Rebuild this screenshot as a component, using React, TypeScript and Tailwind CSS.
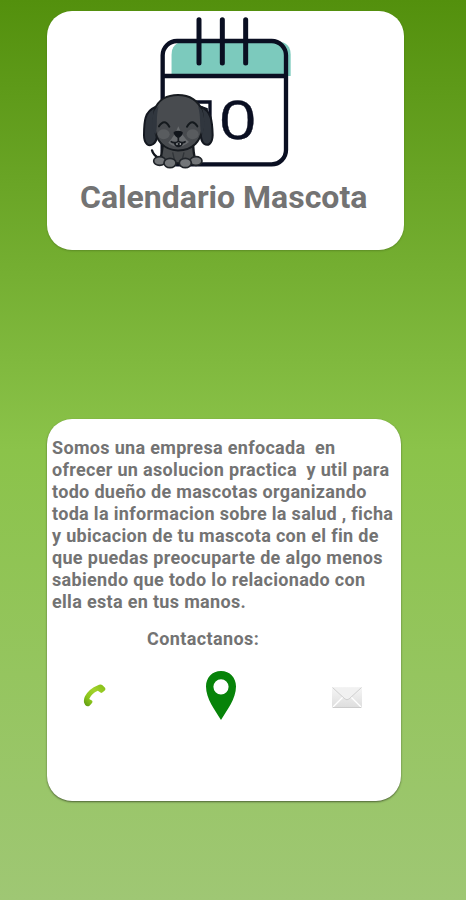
import React from "react";

function CalendarLogo() {
  return (
    <svg className="block h-[170px] w-[180px]" viewBox="0 0 540 510" fill="none" role="img" aria-label="Calendario con mascota">
      <path d="M124 213V150Q126 112 160 110H446Q482 112 482 150V213Z" fill="#7ccabd" />
      <path d="M104 213V145Q106 119 132 112Q124 125 124 150V213Z" fill="#fff" />
      <rect x="98" y="108" width="370" height="370" rx="43" stroke="#0a0f22" strokeWidth="13" />
      <path d="M97 213H468" stroke="#0a0f22" strokeWidth="13" />
      <path d="M207 44V174M277 44V174M347 44V174" stroke="#0a0f22" strokeWidth="15" strokeLinecap="round" />
      <text transform="translate(323 401) scale(1.27 1)" fontSize="157" textAnchor="middle" fill="#0a0f22" stroke="#0a0f22" strokeWidth="1" className="font-['Open_Sans',sans-serif]">0</text>
      <path d="M196 291H240V375" stroke="#0a0f22" strokeWidth="10" />
      <path d="M206 303L230 312V336" stroke="#0a0f22" strokeWidth="7" />
      <path d="M66 436Q70 453 91 461" stroke="#11151c" strokeWidth="7" strokeLinecap="round" />
      <path d="M99 417C94 446 94 465 86 475H202C189 459 191 435 189 412Z" fill="#484b4e" stroke="#15191e" strokeWidth="7" />
      <path d="M128 442L134 468M162 442L156 468" stroke="#303438" strokeWidth="4" />
      <g fill="#737679" stroke="#202429" strokeWidth="5">
        <ellipse cx="89" cy="468" rx="18" ry="13" />
        <ellipse cx="198" cy="468" rx="18" ry="13" />
        <ellipse cx="120" cy="474" rx="18" ry="14" />
        <ellipse cx="166" cy="474" rx="18" ry="14" />
      </g>
      <path d="M76 306C44 319 42 350 42 391C42 418 57 426 70 417C86 407 82 371 83 345Z" fill="#30363e" stroke="#141820" strokeWidth="6" />
      <path d="M213 306C244 317 247 350 248 391C247 418 233 424 222 416C208 405 212 372 209 344Z" fill="#30363e" stroke="#141820" strokeWidth="6" />
      <path d="M74 315C84 284 112 270 144 270C178 270 207 286 216 319C223 354 219 394 196 417C167 444 119 442 94 416C71 392 68 347 74 315Z" fill="#484b4f" stroke="#171b20" strokeWidth="6" />
      <path d="M74 315C62 343 65 371 76 390C85 368 76 340 86 303Z" fill="#30363e" />
      <path d="M216 315C226 343 225 371 216 390C206 368 215 340 204 303Z" fill="#30363e" />
      <ellipse cx="101" cy="388" rx="18" ry="15" fill="#595c5f" />
      <ellipse cx="188" cy="388" rx="18" ry="15" fill="#595c5f" />
      <path d="M145 364Q133 394 115 413Q144 438 177 411Q156 394 145 364Z" fill="#686b6e" />
      <path d="M87 364Q103 339 118 365M171 365Q187 339 202 364" stroke="#14191d" strokeWidth="6" strokeLinecap="round" />
      <path d="M131 381Q144 373 158 381Q160 391 145 400Q129 390 131 381Z" fill="#11151b" />
      <path d="M145 394V409M122 409Q133 417 145 409Q158 417 167 409" stroke="#171b20" strokeWidth="5" />
      <path d="M131 414H160Q155 427 145 427Q135 427 131 414Z" fill="#171b20" />
      <path d="M139 414V420H143V414M149 414V420H153V414" fill="#9a9da0" />
    </svg>
  );
}

const lines = [
  "Somos una empresa enfocada  en",
  "ofrecer un asolucion practica  y util para",
  "todo dueño de mascotas organizando",
  "toda la informacion sobre la salud , ficha",
  "y ubicacion de tu mascota con el fin de",
  "que puedas preocuparte de algo menos",
  "sabiendo que todo lo relacionado con",
  "ella esta en tus manos.",
];

function PhoneIcon() {
  return (
    <svg className="h-6 w-6" viewBox="0 0 24 24" aria-label="Teléfono">
      <defs><linearGradient id="phone" x1="1" y1="0" x2="0" y2="1"><stop stopColor="#83bd16" /><stop offset=".4" stopColor="#a2d22c" /><stop offset=".7" stopColor="#8cc61b" /><stop offset="1" stopColor="#579311" /></linearGradient></defs>
      <path d="M14.5 1.5Q17.5-.3 19.5 1.2L22 3.8Q23 5.5 21.5 6.8L19.3 8.6Q17.8 9.4 16.7 8.1L14.8 6.8Q8.5 9.5 6.2 15L8.9 16.6Q10.1 17.8 8.8 19.3L6.5 21.7Q4.2 23.2 2.2 21L1 18.5Q.5 15 2 12.2Q6.5 4.5 14.5 1.5Z" fill="url(#phone)" />
    </svg>
  );
}

function PinIcon() {
  return (
    <svg className="h-[50px] w-8" viewBox="0 0 32 50" aria-label="Ubicación">
      <path fillRule="evenodd" d="M16 0C7 0 1 6.8 1 15.5C1 28 10 39 16 49C22 39 31 28 31 15.5C31 6.8 25 0 16 0ZM16 8.2A7.6 7.6 0 1 1 16 23.4A7.6 7.6 0 1 1 16 8.2Z" fill="#078309" />
    </svg>
  );
}

function MailIcon() {
  return (
    <svg className="h-6 w-8" viewBox="0 0 32 24" aria-label="Correo">
      <defs><linearGradient id="mail" x1="0" y1="0" x2="0" y2="1"><stop stopColor="#f6f6f6" /><stop offset="1" stopColor="#dddddd" /></linearGradient></defs>
      <rect x="1" y="3" width="30" height="21" rx="1.5" fill="url(#mail)" />
      <path d="M2 23L12 13M30 23L20 13" stroke="#fff" strokeWidth="1.4" />
      <path d="M1.5 3.5L14 15Q16 16.5 18 15L30.5 3.5Z" fill="#f1f1f1" />
      <path d="M1.5 3.5L14 15Q16 16.5 18 15L30.5 3.5" stroke="#d0d0d0" fill="none" />
      <path d="M2 23.5H30" stroke="#cccccc" />
    </svg>
  );
}

export default function App() {
  return (
    <main className="h-[900px] w-full overflow-hidden bg-linear-[180deg,#53900d_0%,#8bc34a_50%,#9fc774_100%] pt-[11px] pl-[47px] font-[Roboto,sans-serif] text-[#737373]">
      <section className="flex h-[239px] w-[357px] flex-col overflow-hidden rounded-[25px] bg-white shadow-[0_1px_2px_#00000030]">
        <div className="-mt-1.5 ml-[83px] h-[170px]"><CalendarLogo /></div>
        <h1 className="ml-[33px] whitespace-nowrap text-[32px] leading-[44px] font-bold">Calendario Mascota</h1>
      </section>
      <section className="mt-[169px] flex h-[382px] w-[354px] flex-col rounded-[25px] bg-white pt-[18px] pl-[5px] shadow-[0_1px_2px_#00000080]">
        <div className="text-[18px] leading-[22px] font-bold tracking-[0.32px] whitespace-pre">
          {lines.map((line) => <p key={line}>{line}</p>)}
        </div>
        <h2 className="mt-[15px] ml-[95px] text-[18px] leading-[22px] font-bold tracking-[0.4px]">Contactanos:</h2>
        <div className="mt-[20px] flex h-[52px] items-center">
          <div className="ml-[31px]"><PhoneIcon /></div>
          <div className="ml-[98px]"><PinIcon /></div>
          <div className="ml-[94px]"><MailIcon /></div>
        </div>
      </section>
    </main>
  );
}
